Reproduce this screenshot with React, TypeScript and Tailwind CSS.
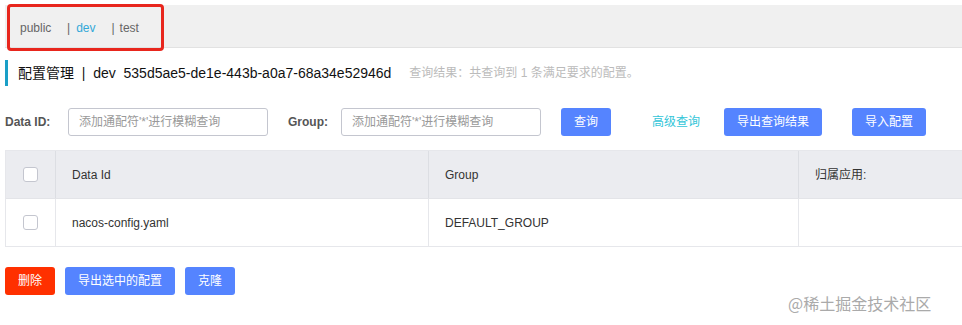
const font = { fontFamily: '"Liberation Sans", "Noto Sans CJK SC", sans-serif' };

function Checkbox() {
  return <span className="block w-[15px] h-[15px] rounded-[3px] border border-[#c4c6cf] bg-white" />;
}

export default function App() {
  return (
    <div className="w-[962px] h-[325px] bg-white text-[#333] relative overflow-hidden" style={font}>
      {/* namespace bar */}
      <div className="pt-[5px] pl-[5px]">
        <div className="h-[43px] bg-[#f0f0f0] border-b border-[#e2e2e2] flex items-center pt-[3px] text-[12px] text-[#666] pl-[15px]">
          <span className="w-[31px]">public</span>
          <span className="ml-[16px]">|</span>
          <span className="ml-[6px] text-[#33a8d8]">dev</span>
          <span className="ml-[16px]">|</span>
          <span className="ml-[5px]">test</span>
        </div>
      </div>
      <div className="absolute left-[7px] top-[4px] w-[157px] h-[47px] border-[3px] border-[#e8261d] rounded-[4px]" />

      {/* title */}
      <div className="mt-[12px] ml-[5px] flex items-center h-[26px] border-l-[3px] border-[#1a9fc7] pl-[10px]">
        <span className="text-[14px] text-[#111]">配置管理&nbsp;&nbsp;|&nbsp;&nbsp;dev&nbsp;&nbsp;535d5ae5-de1e-443b-a0a7-68a34e52946d</span>
        <span className="ml-[18px] text-[12px] text-[#bbb]">查询结果：共查询到 1 条满足要求的配置。</span>
      </div>

      {/* search row */}
      <div className="mt-[22px] ml-[5px] flex items-center h-[28px] text-[12px]">
        <span className="font-bold text-[#555] w-[63px]">Data ID:</span>
        <div className="w-[200px] h-[28px] border border-[#c4c6cf] rounded-[3px] flex items-center pl-[10px] text-[#999]">添加通配符'*'进行模糊查询</div>
        <span className="ml-[20px] font-bold text-[#555] w-[53px]">Group:</span>
        <div className="w-[200px] h-[28px] border border-[#c4c6cf] rounded-[3px] flex items-center pl-[10px] text-[#999]">添加通配符'*'进行模糊查询</div>
        <button className="ml-[20px] w-[50px] h-[28px] rounded-[3px] bg-[#5584ff] text-white">查询</button>
        <span className="ml-[41px] text-[#33c5d8]">高级查询</span>
        <button className="ml-[24px] w-[98px] h-[28px] rounded-[3px] bg-[#5584ff] text-white">导出查询结果</button>
        <button className="ml-[30px] w-[74px] h-[28px] rounded-[3px] bg-[#5584ff] text-white">导入配置</button>
      </div>

      {/* table */}
      <div className="mt-[14px] ml-[5px] border-t border-b border-l border-[#e6e7eb] text-[12px]">
        <div className="flex h-[48px] bg-[#ebecf0] border-b border-[#e3e4e8]">
          <div className="w-[50px] flex items-center justify-center border-r border-[#dcdee3]"><Checkbox /></div>
          <div className="w-[373px] flex items-center pl-[16px] border-r border-[#dcdee3]">Data Id</div>
          <div className="w-[370px] flex items-center pl-[16px] border-r border-[#dcdee3]">Group</div>
          <div className="flex-1 flex items-center pl-[16px]">归属应用:</div>
        </div>
        <div className="flex h-[47px]">
          <div className="w-[50px] flex items-center justify-center border-r border-[#e6e7eb]"><Checkbox /></div>
          <div className="w-[373px] flex items-center pl-[16px] border-r border-[#e6e7eb]">nacos-config.yaml</div>
          <div className="w-[370px] flex items-center pl-[16px] border-r border-[#e6e7eb]">DEFAULT_GROUP</div>
          <div className="flex-1" />
        </div>
      </div>

      {/* bottom actions */}
      <div className="mt-[20px] ml-[5px] flex gap-[10px] text-[12px]">
        <button className="w-[50px] h-[28px] rounded-[3px] bg-[#ff3000] text-white">删除</button>
        <button className="w-[110px] h-[28px] rounded-[3px] bg-[#5584ff] text-white">导出选中的配置</button>
        <button className="w-[50px] h-[28px] rounded-[3px] bg-[#5584ff] text-white">克隆</button>
      </div>

      <div className="absolute left-[788px] top-[291px] text-[16px] text-[#aaa]" style={{ fontFamily: '"Noto Sans CJK SC", sans-serif' }}>@稀土掘金技术社区</div>
    </div>
  );
}
